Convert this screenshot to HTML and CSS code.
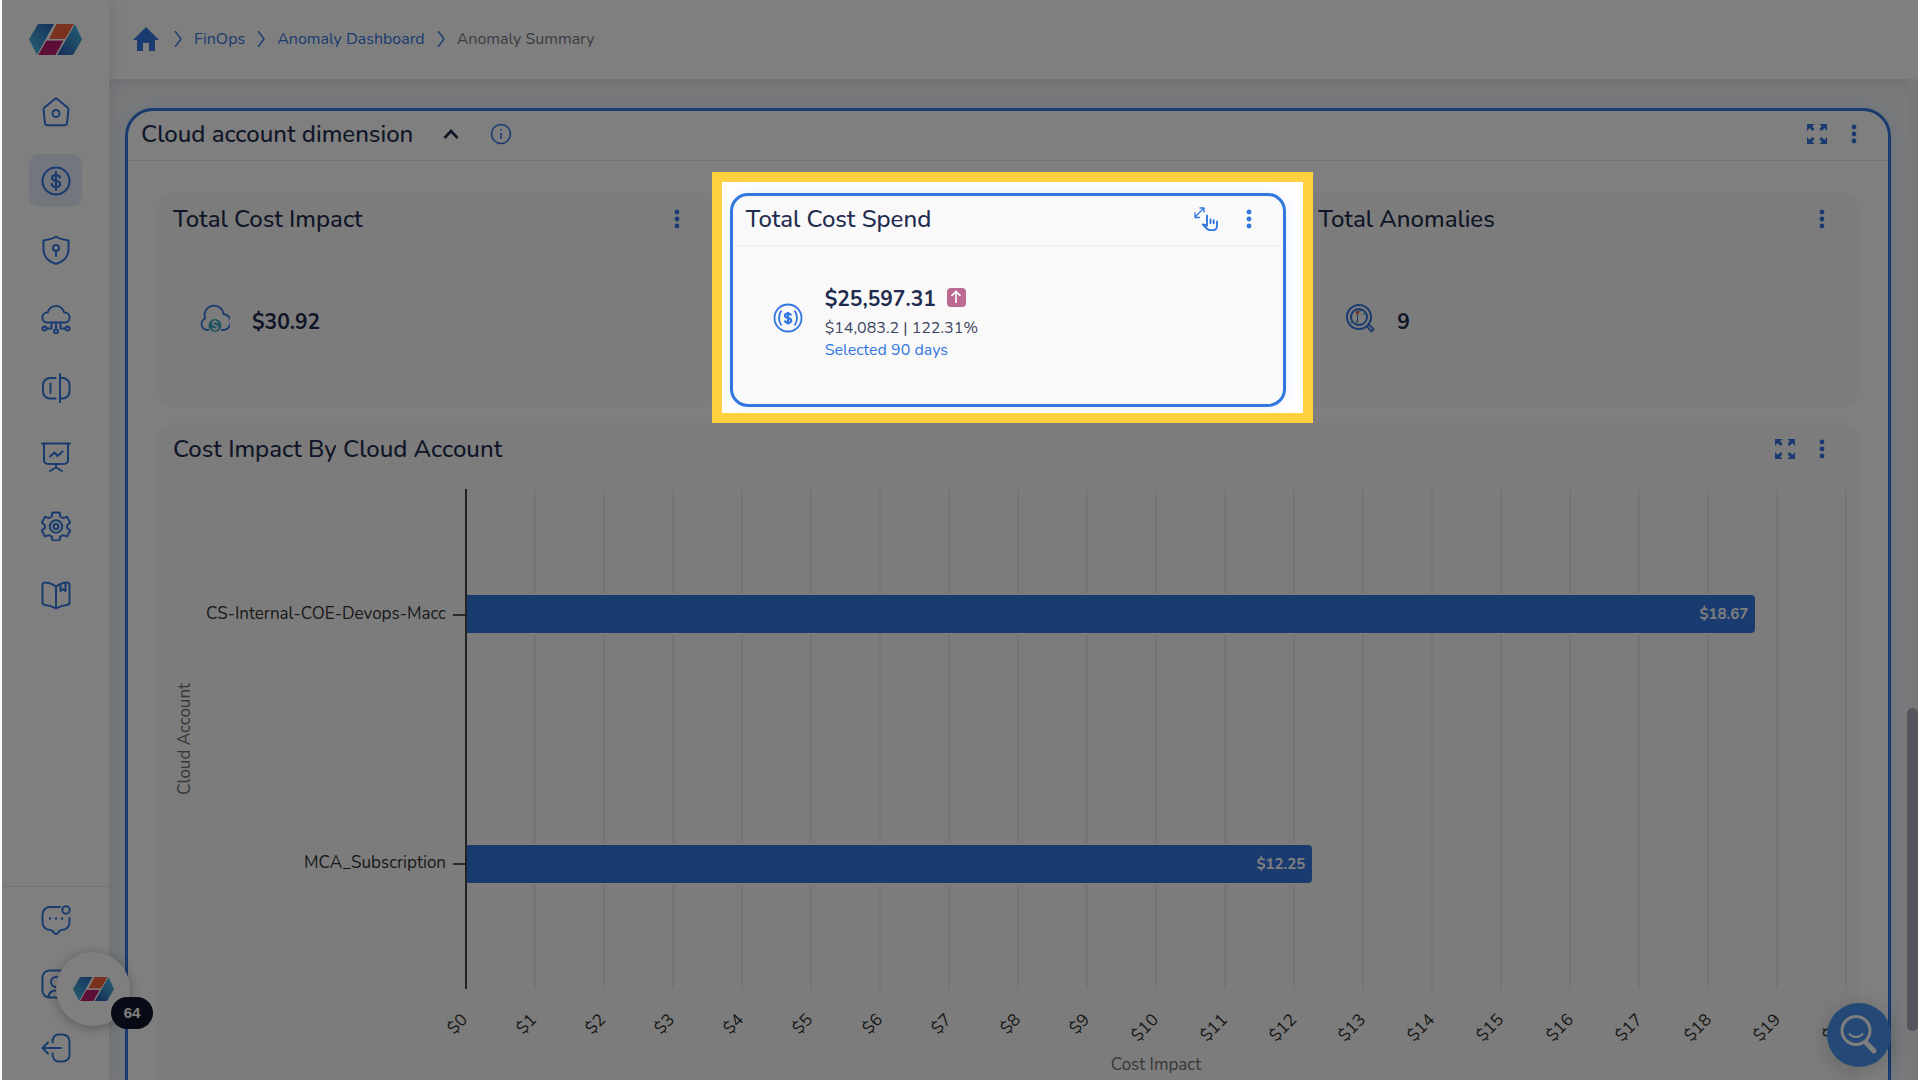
FILE: index.html
```html
<!DOCTYPE html>
<html lang="en">
  <head>
    <meta charset="UTF-8" />
    <meta name="viewport" content="width=device-width, initial-scale=1.0" />
    <title>Anomaly Summary</title>
    <link rel="stylesheet" href="styles.css">
  </head>
  <body>
    <!-- Shared icons -->
    <svg class="sprite" aria-hidden="true">
      <defs>
        <linearGradient id="logoLeft" x1="0" y1="1" x2="1" y2="0">
          <stop offset="0" stop-color="#4cc3e6" />
          <stop offset="1" stop-color="#2a62b4" />
        </linearGradient>
        <linearGradient id="logoRight" x1="0" y1="1" x2="1" y2="0">
          <stop offset="0" stop-color="#2a56b0" />
          <stop offset="1" stop-color="#4cc3e6" />
        </linearGradient>
        <symbol id="logo" viewBox="0 0 53 31">
          <path d="M9 0h16L8 31 0 15.500z" fill="url(#logoLeft)" />
          <path d="M46 0l7 15.500L44 31H28z" fill="url(#logoRight)" />
          <path d="M27.500 0H45l-8.500 15H20z" fill="#f0643c" />
          <path d="M17 16.500h17.500L26.500 31H9z" fill="#b81c6c" />
          <path d="M26.300 0L18.500 15.700h17M45.500 0L27.300 31M17.500 15.700L8.500 31" fill="none" stroke="#fff" stroke-width="1" />
        </symbol>
        <symbol id="dots" viewBox="0 0 6 20">
          <circle cx="3" cy="3" r="2.400" />
          <circle cx="3" cy="10" r="2.400" />
          <circle cx="3" cy="17" r="2.400" />
        </symbol>
        <symbol id="expand" viewBox="0 0 20 20">
          <path d="M0 0h7.500L5.200 2.300 7.500 5 5.800 7 2.500 4.200 0 7z" />
          <path d="M20 0h-7.500l2.300 2.300L12.500 5l1.700 2 3.300-2.800L20 7z" />
          <path d="M0 20h7.500l-2.300-2.300L7.500 15l-1.700-2-3.300 2.800L0 13z" />
          <path d="M20 20h-7.500l2.300-2.300-2.300-2.700 1.700-2 3.300 2.800L20 13z" />
        </symbol>
      </defs>
    </svg>

    <div class="app">
      <aside class="sidebar">
        <a class="logo" href="#" aria-label="Home page">
          <svg width="53" height="31"><use href="#logo" /></svg>
        </a>
        <nav class="side-nav">
          <a class="side-link" href="#" aria-label="Home">
            <svg viewBox="0 0 30 30"><path d="M13.500 2.200a2.500 2.500 0 0 1 3 0l10 8.300a2.500 2.500 0 0 1 1 2.300L26 26a2.500 2.500 0 0 1-2.500 2.300h-17A2.500 2.500 0 0 1 4 26L2.500 12.800a2.500 2.500 0 0 1 1-2.300z" /><circle cx="15" cy="16.500" r="3.500" /></svg>
          </a>
          <a class="side-link active" href="#" aria-label="FinOps">
            <svg viewBox="0 0 30 30"><circle cx="15" cy="15" r="13.500" /><path d="M19 11.500c-.4-1.700-2-2.500-4-2.500-2.300 0-4 1-4 2.900 0 4.300 8.200 1.700 8.200 6.100 0 2-1.900 3-4.200 3s-4.100-.9-4.400-2.800M15 6v18" stroke-width="2.200" /></svg>
          </a>
          <a class="side-link" href="#" aria-label="Security">
            <svg viewBox="0 0 30 30"><path d="M15 1.500c3.500 2.500 7.500 3.200 12.500 4V14c0 7.500-5 12.500-12.500 15C7.500 26.500 2.500 21.500 2.500 14V5.500C7.500 4.700 11.500 4 15 1.500z" /><circle cx="15" cy="13" r="3" /><path d="M15 16v5" /></svg>
          </a>
          <a class="side-link" href="#" aria-label="Cloud resources">
            <svg viewBox="0 0 30 30"><path d="M7 18.500H6a5 5 0 0 1 .7-10 8.500 8.500 0 0 1 16.500 0A5 5 0 0 1 24 18.500z" /><path d="M10.500 18.500v6H6M19.500 18.500v6H24M15 18.500v7" /><circle cx="3.500" cy="24.500" r="2" /><circle cx="26.500" cy="24.500" r="2" /><circle cx="15" cy="27.500" r="2" /></svg>
          </a>
          <a class="side-link" href="#" aria-label="Compare">
            <svg viewBox="0 0 30 30"><path d="M14.500 5H9a7 7 0 0 0-7 7v6.500a7 7 0 0 0 7 7h5.500M19 1v28.500M19.500 5h2a7 7 0 0 1 7 7v6.500a7 7 0 0 1-7 7h-2M9.500 10.500V20" /></svg>
          </a>
          <a class="side-link" href="#" aria-label="Reports">
            <svg viewBox="0 0 30 30"><path d="M1 1.500h28M3 2v16a4 4 0 0 0 4 4h16a4 4 0 0 0 4-4V2M15 22v3.500M9 29l6-3.500 6 3.500M9 14.500l4.500-4 3 3.500 5-4.500" /></svg>
          </a>
          <a class="side-link" href="#" aria-label="Settings">
            <svg viewBox="0 0 30 30"><path d="M11.500 1.500h7l.8 4 2.700 1.600 3.900-1.400 3.300 5.800-3 2.700v2.700l3 2.700-3.300 5.800-3.900-1.300-2.700 1.500-.8 3.900h-7l-.8-3.900L8 24.100l-3.900 1.300L.8 19.600l3-2.700v-2.700l-3-2.700 3.300-5.800L8 7.100l2.700-1.600z" /><circle cx="15" cy="15.500" r="6.200" /><circle cx="15" cy="15.500" r="2.500" /></svg>
          </a>
          <a class="side-link" href="#" aria-label="Documentation">
            <svg viewBox="0 0 30 30"><path d="M15 6.500C11.500 4 8 2.800 4 2.600a2.300 2.300 0 0 0-2.500 2.300v17.500c0 1.200.9 2.200 2.100 2.400 4.300.6 7.700 1.600 11.400 3.700 3.700-2.100 7.100-3.100 11.400-3.700a2.400 2.400 0 0 0 2.100-2.400V4.900A2.300 2.300 0 0 0 26 2.600c-4 .2-7.500 1.400-11 3.900zM15 6.500v22M19.500 4.500v6.500l2.500-2 2.500 2V3" /></svg>
          </a>
        </nav>
        <div class="side-footer">
          <a class="side-link" href="#" aria-label="Messages">
            <svg viewBox="0 0 30 30"><path d="M19 2H9a7.500 7.500 0 0 0-7.500 7.500v8A7.500 7.500 0 0 0 9 25c1.500 0 2 .4 2.700 1.200l1.900 2.200c.8.900 2 .9 2.800 0l1.900-2.200C19 25.400 19.500 25 21 25a7.500 7.500 0 0 0 7.500-7.500V13" /><circle cx="25" cy="5" r="3.700" /><path d="M9 13.500h.1M15 13.500h.1M21 13.500h.1" stroke-width="2.400" /></svg>
          </a>
          <a class="side-link" href="#" aria-label="Profile">
            <svg viewBox="0 0 30 30"><rect x="1.500" y="1.500" width="27" height="27" rx="7" /><circle cx="15" cy="13" r="5" /><path d="M7.500 28c.5-4.500 3.500-6.500 7.500-6.500s7 2 7.500 6.500" /></svg>
          </a>
          <a class="side-link" href="#" aria-label="Log out">
            <svg viewBox="0 0 30 30"><path d="M11.500 9.500C11.500 4 13.500 1.500 18 1.500h3c5 0 7.500 2.500 7.500 7.500v12c0 5-2.500 7.500-7.500 7.500h-3c-4.500 0-6.500-2.500-6.500-8M20 15H2M7 9.500L1.500 15 7 20.500" /></svg>
          </a>
        </div>
      </aside>

      <div class="page">
        <header class="topbar">
          <nav class="breadcrumb" aria-label="Breadcrumb">
            <a href="#" aria-label="Home">
              <svg class="home-icon" width="26" height="24" viewBox="0 0 26 24"><path d="M13 0l13 13h-4v11h-6v-8h-6v8H4V13H0z" /></svg>
            </a>
            <svg class="sep" width="8" height="16" viewBox="0 0 8 16"><path d="M1 0l6 8-6 8" /></svg>
            <a href="#">FinOps</a>
            <svg class="sep" width="8" height="16" viewBox="0 0 8 16"><path d="M1 0l6 8-6 8" /></svg>
            <a href="#">Anomaly Dashboard</a>
            <svg class="sep" width="8" height="16" viewBox="0 0 8 16"><path d="M1 0l6 8-6 8" /></svg>
            <span>Anomaly Summary</span>
          </nav>
        </header>

        <main class="content">
          <section class="panel">
            <div class="panel-header">
              <h1>Cloud account dimension</h1>
              <button type="button" class="icon-btn collapse" aria-label="Collapse">
                <svg width="16" height="10" viewBox="0 0 16 10"><path d="M1.500 9L8 2l6.500 7" /></svg>
              </button>
              <button type="button" class="icon-btn info" aria-label="Info">
                <svg width="22" height="22" viewBox="0 0 22 22"><circle cx="11" cy="11" r="9.500" /><path d="M11 10v6M11 6v1.500" /></svg>
              </button>
              <div class="actions">
                <button type="button" class="icon-btn" aria-label="Expand"><svg width="20" height="20"><use href="#expand" /></svg></button>
                <button type="button" class="icon-btn" aria-label="More"><svg width="6" height="20"><use href="#dots" /></svg></button>
              </div>
            </div>

            <div class="panel-body">
              <div class="cards">
                <article class="card">
                  <div class="card-header">
                    <h2>Total Cost Impact</h2>
                    <div class="actions">
                      <button type="button" class="icon-btn" aria-label="More"><svg width="6" height="20"><use href="#dots" /></svg></button>
                    </div>
                  </div>
                  <div class="card-body">
                    <svg class="stat-icon" viewBox="0 0 30 30"><path d="M9 27H7.500A6 6 0 0 1 5.200 15.500 9.500 9.500 0 1 1 23.500 11 8 8 0 0 1 22 27h-1" /><circle cx="15" cy="22.500" r="6.500" fill="#3fa9bd" stroke="none" /><path d="M17.500 20c-.5-1-1.500-1.300-2.500-1.300-1.500 0-2.500.7-2.500 1.800 0 2.500 5.200 1.300 5.200 3.900 0 1.200-1.200 1.900-2.700 1.900-1.300 0-2.300-.5-2.700-1.600M15 17v2M15 26v2" stroke="#f9f9f9" stroke-width="1.500" /></svg>
                    <div class="stat"><strong>$30.92</strong></div>
                  </div>
                </article>

                <article class="card selected">
                  <div class="card-header">
                    <h2>Total Cost Spend</h2>
                    <div class="actions">
                      <button type="button" class="icon-btn" aria-label="Drill down">
                        <svg class="line" width="24" height="24" viewBox="0 0 24 24"><path d="M1 10l8.500-8.500M6 1h4v4M1 6v4.500h4.500" stroke-width="1.300" /><path d="M13 17V8.500v10L8.800 17.500l3 3c1.500 2 2.500 2.800 5 2.800h1.500c3 0 4.700-1.500 4.700-4.500V14.500M16.500 12.500V16M19.700 13.300V16.200" stroke-width="1.900" /></svg>
                      </button>
                      <button type="button" class="icon-btn" aria-label="More"><svg width="6" height="20"><use href="#dots" /></svg></button>
                    </div>
                  </div>
                  <div class="card-body">
                    <svg class="stat-icon" viewBox="0 0 30 30"><circle cx="15" cy="15" r="13.500" /><path d="M8.500 7.500c-3.300 4.500-3.300 10.500 0 15M21.500 7.500c3.300 4.500 3.300 10.500 0 15" /><path d="M18 12.500c-.4-1.400-1.500-2-3-2-1.800 0-3 .8-3 2.200 0 3.300 6.200 1.300 6.200 4.700 0 1.500-1.400 2.300-3.200 2.300-1.600 0-2.900-.7-3.200-2.200M15 9v12.500" stroke-width="2.200" /></svg>
                    <div class="stat">
                      <div class="stat-value">
                        <strong>$25,597.31</strong>
                        <span class="trend"><svg width="12" height="14" viewBox="0 0 12 14"><path d="M6 13V2M1.500 6L6 1.500 10.500 6" /></svg></span>
                      </div>
                      <span>$14,083.2 | 122.31%</span>
                      <a href="#">Selected 90 days</a>
                    </div>
                  </div>
                  <div class="spotlight"></div>
                </article>

                <article class="card">
                  <div class="card-header">
                    <h2>Total Anomalies</h2>
                    <div class="actions">
                      <button type="button" class="icon-btn" aria-label="More"><svg width="6" height="20"><use href="#dots" /></svg></button>
                    </div>
                  </div>
                  <div class="card-body">
                    <svg class="stat-icon" viewBox="0 0 30 30"><circle cx="14" cy="14" r="12" stroke-width="2" /><circle cx="14" cy="14" r="8" stroke-width="2" /><path d="M12.500 10.500v8M12 9l6-2" stroke-width="1" /><circle cx="12.500" cy="9.500" r="1.800" fill="#e0603a" stroke="none" /><path d="M18.500 7.500c1.500 1 1.500 3 0 4M6 20l2-2M11 18l2 2" stroke="#3fa9bd" stroke-width="1.200" /><path d="M22 23.500l2-2 4.500 5-2.300 2z" /></svg>
                    <div class="stat"><strong>9</strong></div>
                  </div>
                </article>
              </div>

              <article class="card">
                <div class="card-header">
                  <h2>Cost Impact By Cloud Account</h2>
                  <div class="actions">
                    <button type="button" class="icon-btn" aria-label="Expand"><svg width="20" height="20"><use href="#expand" /></svg></button>
                    <button type="button" class="icon-btn" aria-label="More"><svg width="6" height="20"><use href="#dots" /></svg></button>
                  </div>
                </div>
                <div class="chart">
                  <div class="y-title">Cloud Account</div>
                  <div class="y-labels">
                    <span>CS-Internal-COE-Devops-Macc</span>
                    <span>MCA_Subscription</span>
                  </div>
                  <div class="plot">
                    <div class="grid-lines">
                      <i></i><i></i><i></i><i></i><i></i><i></i><i></i><i></i><i></i><i></i>
                      <i></i><i></i><i></i><i></i><i></i><i></i><i></i><i></i><i></i><i></i>
                    </div>
                    <div class="bars">
                      <div class="band"><div class="bar" style="width: 93.35%">$18.67</div></div>
                      <div class="band"><div class="bar" style="width: 61.25%">$12.25</div></div>
                    </div>
                  </div>
                  <div class="x-labels">
                    <span>$0</span><span>$1</span><span>$2</span><span>$3</span><span>$4</span><span>$5</span><span>$6</span>
                    <span>$7</span><span>$8</span><span>$9</span><span>$10</span><span>$11</span><span>$12</span><span>$13</span>
                    <span>$14</span><span>$15</span><span>$16</span><span>$17</span><span>$18</span><span>$19</span><span>$20</span>
                  </div>
                  <div class="x-title">Cost Impact</div>
                </div>
              </article>
            </div>
          </section>
        </main>
        <div class="scrollbar"><div class="thumb"></div></div>
      </div>

      <button type="button" class="guide" aria-label="Open guide">
        <svg width="41" height="24"><use href="#logo" /></svg>
        <span class="badge">64</span>
      </button>
      <button type="button" class="search-fab" aria-label="Search">
        <svg width="44" height="44" viewBox="0 0 44 44"><circle cx="19" cy="17.500" r="14" /><path d="M12.500 21c3.500 4 9.500 4 13 0" stroke-width="2" /><path d="M29 29.500l8 8.500" stroke-width="5" /></svg>
      </button>
    </div>
  </body>
</html>
```
FILE: styles.css
```css
* {
  box-sizing: border-box;
}
body {
  margin: 0;
  padding: 0 2px;
  background-color: #fff;
  color: #1f2c4f;
  font-family: Nunito, Lato, sans-serif;
  font-size: 17px;
  line-height: 22px;
}
a {
  color: #3276df;
  text-decoration: none;
}
h1,
h2 {
  margin: 0;
  font-size: 24px;
  line-height: 32px;
  font-weight: 500;
}
svg {
  display: block;
}
.sprite {
  position: absolute;
  width: 0;
  height: 0;
}
.app {
  position: relative;
  display: flex;
  height: 100vh;
  overflow: hidden;
}

/* Sidebar */
.sidebar {
  position: relative;
  z-index: 2;
  display: flex;
  flex-direction: column;
  width: 107px;
  padding-top: 24px;
  background-color: #fff;
  box-shadow: 2px 0 16px rgba(40, 60, 90, 0.12);
}
.logo {
  align-self: center;
  margin-bottom: 30px;
}
.side-nav {
  display: flex;
  flex: 1;
  flex-direction: column;
  align-items: center;
  gap: 16px;
}
.side-link {
  display: flex;
  align-items: center;
  justify-content: center;
  width: 53px;
  height: 53px;
  border-radius: 10px;
}
.side-link.active {
  background-color: #e6eefb;
}
.side-link svg {
  width: 30px;
  height: 30px;
  fill: none;
  stroke: #3276df;
  stroke-width: 2;
  stroke-linecap: round;
  stroke-linejoin: round;
}
.side-footer {
  display: flex;
  flex-direction: column;
  align-items: center;
  gap: 11px;
  padding: 6px 0;
  border-top: 1px solid #e6e6e6;
}

/* Top bar */
.page {
  position: relative;
  flex: 1;
  min-width: 0;
  background-color: #f1f4f7;
}
.topbar {
  display: flex;
  align-items: center;
  height: 79px;
  padding-left: 24px;
  background-color: #fff;
  box-shadow: 0 2px 16px rgba(40, 60, 90, 0.14);
}
.breadcrumb {
  display: flex;
  align-items: center;
  gap: 12px;
  padding-bottom: 2px;
  color: #757b88;
  font-size: 16px;
}
.home-icon {
  margin-right: 3px;
  fill: #3276df;
}
.sep {
  fill: none;
  stroke: #3276df;
  stroke-width: 1.4;
}

/* Panel */
.content {
  padding: 29px 27px 24px 16px;
}
.panel {
  border: 3px solid #3276df;
  border-radius: 28px;
  background-color: #fff;
  box-shadow: 0 0 16px rgba(50, 118, 223, 0.12);
}
.panel-header {
  display: flex;
  align-items: center;
  height: 50px;
  padding: 0 31px 3px 13px;
  border-bottom: 1px solid #e1e9f5;
}
.panel-body {
  display: flex;
  flex-direction: column;
  gap: 16px;
  padding: 32px 29px 24px;
}
.icon-btn {
  padding: 0;
  border: none;
  background: none;
  fill: #3276df;
  cursor: pointer;
}
.icon-btn .line {
  fill: none;
  stroke: #3276df;
  stroke-linecap: round;
  stroke-linejoin: round;
}
.collapse {
  margin-left: 30px;
  fill: none;
  stroke: #1f2c4f;
  stroke-width: 2.6;
}
.info {
  margin-left: 31px;
  fill: none;
  stroke: #3276df;
  stroke-width: 1.6;
}
.actions {
  display: flex;
  align-items: center;
  gap: 24px;
  margin-left: auto;
}

/* Cards */
.cards {
  display: grid;
  grid-template-columns: repeat(3, 1fr);
  gap: 16px;
}
.card {
  position: relative;
  border: 3px solid #f9f9f9;
  border-radius: 18px;
  background-color: #f9f9f9;
}
.card-header {
  display: flex;
  align-items: center;
  height: 50px;
  padding: 0 31px 3px 13px;
  border-bottom: 1px solid transparent;
}
.card.selected {
  border-color: #3276df;
  box-shadow: 0 0 16px rgba(50, 118, 223, 0.12);
}
.selected .card-header {
  border-bottom-color: #e6eefb;
}
.selected .actions {
  gap: 28px;
}
.card-body {
  display: flex;
  align-items: center;
  gap: 22px;
  height: 158px;
  padding: 0 40px 6px;
}
.stat-icon {
  width: 30px;
  height: 30px;
  margin-bottom: 8px;
  fill: none;
  stroke: #3276df;
  stroke-width: 1.8;
}
.stat {
  display: flex;
  flex-direction: column;
  color: #3c4763;
  font-size: 16px;
}
.stat strong {
  color: #1f2c4f;
  font-size: 21px;
  line-height: 32px;
}
.stat-value {
  display: flex;
  align-items: center;
  gap: 11px;
  margin-bottom: 2px;
}
.trend {
  display: flex;
  align-items: center;
  justify-content: center;
  width: 19px;
  height: 19px;
  margin-bottom: 4px;
  border-radius: 4px;
  background-color: #bb6990;
}
.trend svg {
  fill: none;
  stroke: #fff;
  stroke-width: 1.6;
}

/* Tour highlight, dims everything around the card */
.spotlight {
  position: absolute;
  inset: -24px -30px -19px -21px;
  z-index: 100;
  border: 10px solid #ffd040;
  box-shadow: 0 0 0 9999px rgba(0, 0, 0, 0.5);
  pointer-events: none;
}

/* Chart */
.chart {
  display: grid;
  grid-template-columns: 28px 263px 1fr;
  grid-template-rows: 500px 65px 22px;
  padding: 13px 9px 24px 14px;
  color: #333;
}
.y-title {
  align-self: center;
  writing-mode: vertical-rl;
  transform: rotate(180deg);
  color: #6e6e6e;
}
.y-labels {
  display: grid;
  grid-template-rows: 1fr 1fr;
  padding-bottom: 2px;
}
.y-labels span {
  display: flex;
  align-items: center;
  justify-content: flex-end;
  gap: 7px;
}
.y-labels span::after {
  content: "";
  width: 12px;
  height: 2px;
  margin-top: 3px;
  background-color: #555;
}
.plot {
  display: grid;
  border-left: 2px solid #444;
}
.grid-lines,
.bars {
  display: grid;
  grid-area: 1 / 1;
}
.grid-lines {
  grid-template-columns: repeat(20, 1fr);
}
.grid-lines i {
  border-right: 2px solid #ebebeb;
}
.bars {
  grid-template-rows: 1fr 1fr;
}
.band {
  display: flex;
  align-items: center;
}
.bar {
  height: 38px;
  padding-right: 7px;
  border-radius: 0 4px 4px 0;
  background-color: #3276df;
  box-shadow: 0 2px #f9f9f9, 0 -2px #f9f9f9, 2px 0 #f9f9f9;
  color: #fff;
  font-size: 15px;
  font-weight: 700;
  line-height: 38px;
  text-align: right;
}
.x-labels {
  display: flex;
  grid-column: 3;
  justify-content: space-between;
  padding-top: 17px;
}
.x-labels span {
  display: flex;
  justify-content: flex-end;
  width: 0;
  height: 22px;
  transform: rotate(-45deg);
}
.x-title {
  grid-column: 3;
  color: #6e6e6e;
  text-align: center;
}

/* Scrollbar */
.scrollbar {
  position: absolute;
  top: 79px;
  right: 0;
  bottom: 0;
  width: 11px;
  background-color: #f1f1f1;
}
.thumb {
  height: 323px;
  margin-top: 629px;
  border-radius: 6px;
  background-color: #aaaabc;
}

/* Floating buttons */
.guide,
.search-fab {
  position: absolute;
  z-index: 3;
  display: flex;
  align-items: center;
  justify-content: center;
  padding: 0;
  border: none;
  border-radius: 50%;
  cursor: pointer;
}
.guide {
  bottom: 54px;
  left: 54px;
  width: 74px;
  height: 74px;
  background-color: #fff;
  box-shadow: 0 2px 12px rgba(0, 0, 0, 0.3);
}
.badge {
  position: absolute;
  right: -23px;
  bottom: -3px;
  width: 42px;
  border-radius: 16px;
  background-color: #10162a;
  color: #fff;
  font: 700 15px/32px "Liberation Sans", sans-serif;
}
.search-fab {
  right: 27px;
  bottom: 13px;
  width: 64px;
  height: 64px;
  background-color: #4893ee;
  box-shadow: 0 4px 24px rgba(0, 0, 0, 0.2);
}
.search-fab svg {
  fill: none;
  stroke: #fff;
  stroke-width: 3;
  stroke-linecap: round;
}
```
